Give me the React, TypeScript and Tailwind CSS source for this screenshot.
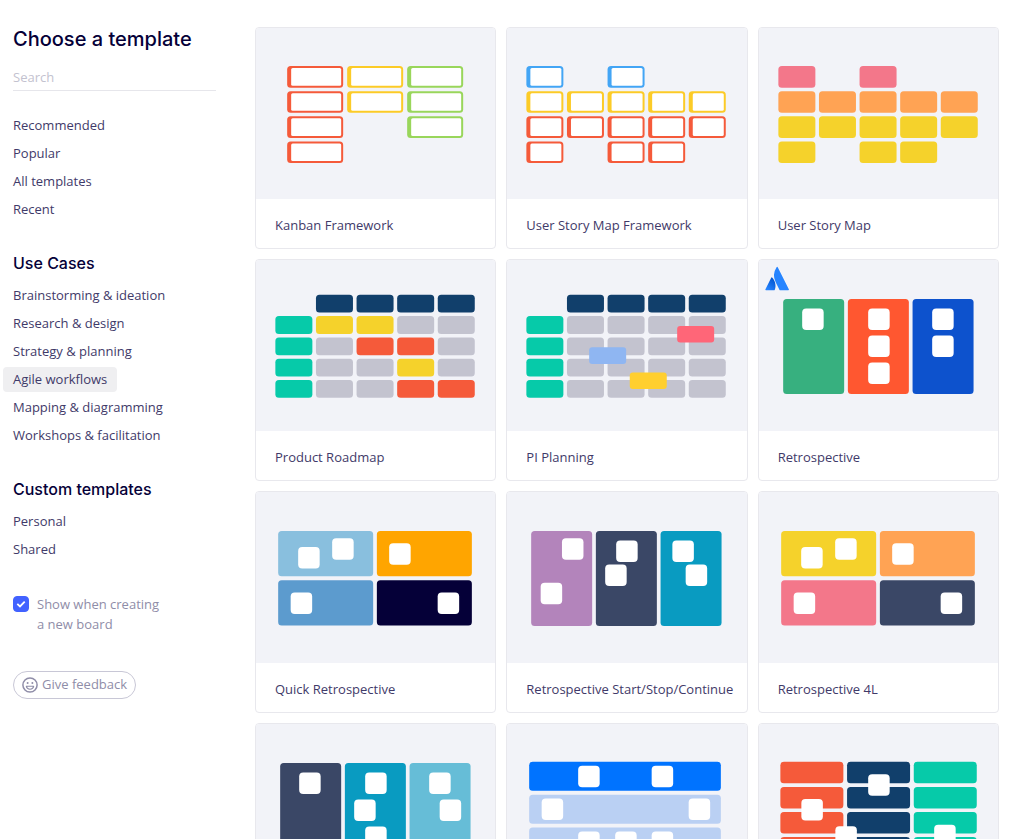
import { useState, type ReactNode } from 'react';
import { clsx } from 'clsx';

type Point = [x: number, y: number];

interface Template {
  id: string;
  title?: string;
  art: ReactNode;
}

interface LinkGroup {
  title?: string;
  items: string[];
}

const GROUPS: LinkGroup[] = [
  { items: ['Recommended', 'Popular', 'All templates', 'Recent'] },
  {
    title: 'Use Cases',
    items: [
      'Brainstorming & ideation',
      'Research & design',
      'Strategy & planning',
      'Agile workflows',
      'Mapping & diagramming',
      'Workshops & facilitation',
    ],
  },
  { title: 'Custom templates', items: ['Personal', 'Shared'] },
];

const COLORS: Record<string, string> = {
  r: '#f55a3a',
  y: '#fccb27',
  l: '#99d65b',
  b: '#43a5f5',
  p: '#f3778a',
  o: '#ffa354',
  g: '#f5d22b',
  n: '#113f6b',
  t: '#06caa9',
  s: '#c3c3cf',
};

interface GridArtProps {
  rows: string[];
  x: number;
  y: number;
  width: number;
  height: number;
  stepX: number;
  stepY: number;
  outlined?: boolean;
}

/** Board made of equal cells. Each character of a row is a key of COLORS, a dot is an empty cell. */
function GridArt({ rows, x, y, width, height, stepX, stepY, outlined }: GridArtProps) {
  return (
    <>
      {rows.flatMap((row, r) =>
        [...row].map((key, c) => {
          if (key === '.') return null;
          const left = x + c * stepX;
          const top = y + r * stepY;
          return (
            <g key={`${r}-${c}`}>
              <rect x={left} y={top} width={width} height={height} rx="3.5" fill={COLORS[key]} />
              {outlined && (
                <rect x={left + 4} y={top + 2} width={width - 6} height={height - 4} rx="1.5" fill="#fff" />
              )}
            </g>
          );
        })
      )}
    </>
  );
}

function Notes({ at }: { at: Point[] }) {
  return (
    <>
      {at.map(([x, y]) => (
        <rect key={`${x}-${y}`} x={x} y={y} width="21.5" height="21.5" rx="4" fill="#fff" />
      ))}
    </>
  );
}

function Columns({ fills, notes }: { fills: string[]; notes: Point[] }) {
  return (
    <>
      {fills.map((fill, i) => (
        <rect key={fill} x={24 + i * 64.7} y="39" width="61" height="95" rx="3.5" fill={fill} />
      ))}
      <Notes at={notes} />
    </>
  );
}

function Quadrants({ fills }: { fills: string[] }) {
  return (
    <>
      {fills.map((fill, i) => (
        <rect
          key={fill}
          x={22 + (i % 2) * 98.7}
          y={39 + Math.floor(i / 2) * 49.3}
          width="95"
          height="45.3"
          rx="3.5"
          fill={fill}
        />
      ))}
      <Notes at={[[42, 55], [76, 46.3], [133, 51.3], [34.5, 100.4], [181.5, 100.4]]} />
    </>
  );
}

function AtlassianMark() {
  return (
    <g transform="translate(6.2 6.8) scale(0.98)">
      <defs>
        <linearGradient id="mark-fold" x1="0.9" y1="0.1" x2="0.3" y2="1">
          <stop offset="0" stopColor="#0052cc" />
          <stop offset="1" stopColor="#2684ff" />
        </linearGradient>
      </defs>
      <path
        fill="url(#mark-fold)"
        d="M7.12 11.084a.683.683 0 0 0-1.16.126L.075 22.974a.703.703 0 0 0 .63 1.018h8.19a.678.678 0 0 0 .63-.39c1.767-3.65.696-9.203-2.406-12.52z"
      />
      <path
        fill="#2684ff"
        d="M11.434.386a15.515 15.515 0 0 0-.906 15.317l3.95 7.9a.703.703 0 0 0 .628.388h8.19a.703.703 0 0 0 .63-1.017L12.63.38a.664.664 0 0 0-1.196.006z"
      />
    </g>
  );
}

const STORY = { x: 19.2, y: 38.1, width: 37, height: 21.6, stepX: 40.6, stepY: 25.1 };
const ROADMAP = { x: 19.2, y: 34.8, width: 37, height: 17.8, stepX: 40.6, stepY: 21.3 };

const TEMPLATES: Template[] = [
  {
    id: 'kanban',
    title: 'Kanban Framework',
    art: (
      <GridArt
        rows={['ryl', 'ryl', 'r.l', 'r..']}
        x={31}
        y={38.1}
        width={56}
        height={21.6}
        stepX={60}
        stepY={25.1}
        outlined
      />
    ),
  },
  {
    id: 'story-map-framework',
    title: 'User Story Map Framework',
    art: <GridArt rows={['b.b..', 'yyyyy', 'rrrrr', 'r.rr.']} {...STORY} outlined />,
  },
  {
    id: 'story-map',
    title: 'User Story Map',
    art: <GridArt rows={['p.p..', 'ooooo', 'ggggg', 'g.gg.']} {...STORY} />,
  },
  {
    id: 'roadmap',
    title: 'Product Roadmap',
    art: <GridArt rows={['.nnnn', 'tggss', 'tsrrs', 'tssgs', 'tssrr']} {...ROADMAP} />,
  },
  {
    id: 'pi-planning',
    title: 'PI Planning',
    art: (
      <>
        <GridArt rows={['.nnnn', 'tssss', 'tssss', 'tssss', 'tssss']} {...ROADMAP} />
        <rect x="170" y="66" width="37" height="16.6" rx="3" fill="#ff6678" />
        <rect x="82" y="87.3" width="37" height="16.6" rx="3" fill="#8fb6f2" />
        <rect x="122.6" y="112.4" width="37" height="16.6" rx="3" fill="#ffcf2f" />
      </>
    ),
  },
  {
    id: 'retrospective',
    title: 'Retrospective',
    art: (
      <>
        <AtlassianMark />
        <Columns
          fills={['#37b07f', '#ff5730', '#0d52cd']}
          notes={[[43, 48.5], [109, 48.5], [109, 75.5], [109, 102.5], [173, 48.5], [173, 75.5]]}
        />
      </>
    ),
  },
  {
    id: 'quick-retrospective',
    title: 'Quick Retrospective',
    art: <Quadrants fills={['#89bfde', '#ffa500', '#5c9bce', '#050038']} />,
  },
  {
    id: 'start-stop-continue',
    title: 'Retrospective Start/Stop/Continue',
    art: (
      <Columns
        fills={['#b384bb', '#3a4766', '#099bc1']}
        notes={[[54.8, 46.3], [33.5, 90.7], [109, 48.4], [98, 72.4], [165.2, 48.4], [178.5, 72.4]]}
      />
    ),
  },
  {
    id: 'retrospective-4l',
    title: 'Retrospective 4L',
    art: <Quadrants fills={['#f5d22b', '#ffa354', '#f3778a', '#3a4766']} />,
  },
  {
    id: 'three-columns',
    art: (
      <Columns
        fills={['#3a4766', '#099bc1', '#66bdd7']}
        notes={[[43, 48.4], [109, 48.4], [98, 75.5], [109, 102.6], [173, 48.4], [183.5, 75.5]]}
      />
    ),
  },
  {
    id: 'three-lanes',
    art: (
      <>
        <rect x="22" y="37.8" width="191.7" height="29" rx="3.5" fill="#0073ff" />
        <rect x="22" y="70.7" width="191.7" height="29" rx="3.5" fill="#bad0f3" />
        <rect x="22" y="103.6" width="191.7" height="29" rx="3.5" fill="#bad0f3" />
        <Notes
          at={[[71, 41.7], [144.5, 41.7], [34.5, 74.4], [181.5, 74.4], [71, 107.4], [108, 107.4], [144.5, 107.4]]}
        />
      </>
    ),
  },
  {
    id: 'stacked-lists',
    art: (
      <>
        <GridArt
          rows={['rnt', 'rnt', 'rnt', 'rnt']}
          x={21.2}
          y={37.8}
          width={63}
          height={21.5}
          stepX={66.7}
          stepY={25.1}
        />
        <Notes at={[[109, 50.3], [42.2, 75], [76.2, 102.3], [175, 100.7]]} />
      </>
    ),
  },
];

function TemplateCard({ title, art }: Template) {
  return (
    <button
      type="button"
      aria-label={title ?? 'Template'}
      className="flex flex-col overflow-hidden rounded border border-[#e8e8ed] bg-white text-left hover:border-[#4262ff]"
    >
      <svg viewBox="0 0 239 171" className="h-[171px] w-full bg-[#f2f3f8]" aria-hidden="true">
        {art}
      </svg>
      {title && (
        <span className="pt-[18px] pr-2 pb-[14px] pl-[19px] text-[13px] leading-[17px]">{title}</span>
      )}
    </button>
  );
}

function SmileIcon() {
  return (
    <svg viewBox="0 0 16 16" className="size-4" fill="none" stroke="currentColor" aria-hidden="true">
      <circle cx="8" cy="8" r="7.1" strokeWidth="1.5" />
      <path d="M4.3 9.2h7.4c-.3 1.9-1.8 3-3.7 3s-3.4-1.1-3.7-3z" strokeWidth="1.1" strokeLinejoin="round" />
      <circle cx="5.6" cy="5.9" r="1" fill="currentColor" stroke="none" />
      <circle cx="10.4" cy="5.9" r="1" fill="currentColor" stroke="none" />
    </svg>
  );
}

function Sidebar() {
  const [active, setActive] = useState('Agile workflows');

  return (
    <aside className="flex w-[216px] shrink-0 flex-col items-start pl-[13px] pt-[27px]">
      <h1 className="font-['Inter',sans-serif] text-[20px] font-medium leading-6 text-[#050038]">
        Choose a template
      </h1>
      <input
        type="search"
        aria-label="Search templates"
        placeholder="Search"
        className="mt-3 h-7 w-full border-b border-[#e6e6eb] text-[13px] outline-none placeholder:text-[#c3c2cf]"
      />

      <nav className="mt-[22px] flex flex-col gap-[31px]">
        {GROUPS.map((group) => (
          <section key={group.items[0]}>
            {group.title && (
              <h2 className="mb-2.5 font-['Inter',sans-serif] text-[16px] font-medium leading-5 text-[#050038]">
                {group.title}
              </h2>
            )}
            <ul className="-ml-2.5 flex flex-col gap-[3px]">
              {group.items.map((item) => (
                <li key={item} className="flex">
                  <button
                    type="button"
                    onClick={() => setActive(item)}
                    className={clsx(
                      'h-[25px] rounded-sm px-2.5 text-[13px] whitespace-nowrap',
                      item === active && 'bg-[#efeff1]'
                    )}
                  >
                    {item}
                  </button>
                </li>
              ))}
            </ul>
          </section>
        ))}
      </nav>

      <label className="mt-8 flex items-start gap-2 text-[13px] leading-5 text-[#8f8da8]">
        <span className="mt-0.5 grid size-4 shrink-0 place-items-center">
          <input
            type="checkbox"
            defaultChecked
            className="peer col-start-1 row-start-1 size-4 appearance-none rounded border border-[#c3c2cf] checked:border-[#4262ff] checked:bg-[#4262ff]"
          />
          <svg
            viewBox="0 0 16 16"
            className="pointer-events-none col-start-1 row-start-1 hidden size-4 peer-checked:block"
            fill="none"
            stroke="#fff"
            strokeWidth="1.8"
            aria-hidden="true"
          >
            <path d="M4.3 7.8 7 10.4l4.7-4.7" />
          </svg>
        </span>
        <span>
          Show when creating
          <br />a new board
        </span>
      </label>

      <button
        type="button"
        className="mt-[37px] flex h-7 items-center gap-1 rounded-full border border-[#c8c7d6] px-2 text-[13px] whitespace-nowrap text-[#8f8da8]"
      >
        <SmileIcon />
        Give feedback
      </button>
    </aside>
  );
}

export default function App() {
  return (
    <div className="flex h-screen overflow-hidden bg-white font-['Open_Sans','Noto_Sans',sans-serif] text-[#3f3a69]">
      <Sidebar />
      <main className="grow overflow-y-auto pt-[27px] pr-[25px] pl-[39px] [scrollbar-width:none]">
        <div className="grid grid-cols-3 gap-2.5 pb-6">
          {TEMPLATES.map((template) => (
            <TemplateCard key={template.id} {...template} />
          ))}
        </div>
      </main>
    </div>
  );
}
